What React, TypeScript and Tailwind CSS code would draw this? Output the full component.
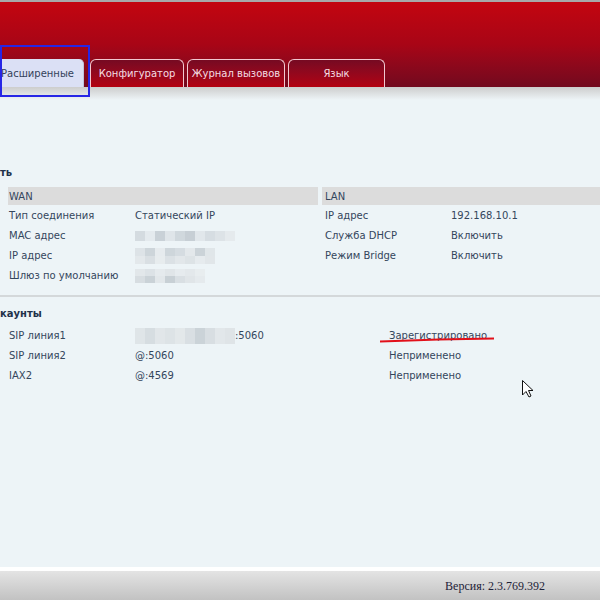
import React from 'react';

const font = { fontFamily: '"DejaVu Sans", Verdana, sans-serif' };

const Blur: React.FC<{ cells: string[]; h: string }> = ({ cells, h }) => (
  <div className={`flex ${h}`}>
    {cells.map((c, i) => (
      <div key={i} className="w-[10px] h-full" style={{ backgroundColor: c }} />
    ))}
  </div>
);

const Row: React.FC<{ label: string; children?: React.ReactNode; lw: string }> = ({ label, children, lw }) => (
  <div className="flex items-center h-[20px] pt-[1px]">
    <div className={`${lw} shrink-0`}>{label}</div>
    <div>{children}</div>
  </div>
);

export default function App() {
  return (
    <div className="w-[600px] h-[600px] overflow-hidden bg-[#edf4f7] text-[10px] text-[#34465c] relative" style={font}>
      <div className="h-[2px] bg-[#a8a8a8]" />
      {/* header */}
      <div className="h-[85px] bg-gradient-to-b from-[#c3050f] via-[#a80516] to-[#72091e] flex items-end">
        <div className="flex items-end h-[28px] w-full">
          <div className="w-[84px] h-[28px] bg-[#dbe0f5] rounded-tr-[5px] border-r border-[#c0c4dc] flex items-center pl-[1px] text-[#34425a]">
            Расширенные
          </div>
          <div className="ml-[6px] w-[94px] h-[28px] rounded-t-[6px] border border-b-0 border-[#f2c8d0] bg-gradient-to-b from-[#760a22] to-[#b3000f] flex items-center justify-center text-[#f6dde2]">
            Конфигуратор
          </div>
          <div className="ml-[3px] w-[98px] h-[28px] rounded-t-[6px] border border-b-0 border-[#f2c8d0] bg-gradient-to-b from-[#760a22] to-[#b3000f] flex items-center justify-center text-[#f6dde2]">
            Журнал вызовов
          </div>
          <div className="ml-[3px] w-[97px] h-[28px] rounded-t-[6px] border border-b-0 border-[#f2c8d0] bg-gradient-to-b from-[#760a22] to-[#b3000f] flex items-center justify-center text-[#f6dde2]">
            Язык
          </div>
        </div>
      </div>
      <div className="h-[13px] bg-gradient-to-b from-[#cdcdcd] to-[#edf4f7]" />

      {/* content */}
      <div className="h-[467px] flex flex-col">
        <div className="mt-[62px] h-[20px] flex items-center font-bold text-[#1f324a]">ть</div>
        <div className="mt-[5px] flex">
          <div className="ml-[8px] w-[310px]">
            <div className="h-[18px] bg-[#dcdcdc] flex items-center pl-[1px] pt-[1px]">WAN</div>
            <div className="pl-[1px]">
              <Row label="Тип соединения" lw="w-[126px]">Статический IP</Row>
              <Row label="MAC адрес" lw="w-[126px]">
                <Blur h="h-[10px]" cells={['#d4dbe0', '#e4eaee', '#c9d1d7', '#dfe5e9', '#d0d8dd', '#c7cfd5', '#e1e7eb', '#d6dde2', '#dde3e7', '#e5eaed']} />
              </Row>
              <Row label="IP адрес" lw="w-[126px]">
                <div className="flex flex-col">
                  <Blur h="h-[8px]" cells={['#dde3e7', '#cdd5da', '#e6ebee', '#ced6db', '#d5dce1', '#e3e8eb', '#cbd3d8', '#e0e6e9']} />
                  <Blur h="h-[8px]" cells={['#e3e8eb', '#d9dfe3', '#e7ecee', '#dbe1e5', '#e2e7ea', '#dde3e6', '#e6ebee', '#e1e6e9']} />
                </div>
              </Row>
              <Row label="Шлюз по умолчанию" lw="w-[126px]">
                <div className="flex flex-col">
                  <Blur h="h-[7px]" cells={['#e2e7ea', '#dce2e6', '#e5eaed', '#e0e5e8', '#e6ebee', '#e3e8eb', '#e8edef']} />
                  <Blur h="h-[7px]" cells={['#d7dde1', '#cad2d7', '#e2e7ea', '#c8d0d5', '#d9dfe3', '#e0e5e8', '#e5eaed']} />
                </div>
              </Row>
            </div>
          </div>
          <div className="ml-[4px] flex-1">
            <div className="h-[18px] bg-[#dcdcdc] flex items-center pl-[3px] pt-[1px]">LAN</div>
            <div className="pl-[3px]">
              <Row label="IP адрес" lw="w-[126px]">192.168.10.1</Row>
              <Row label="Служба DHCP" lw="w-[126px]">Включить</Row>
              <Row label="Режим Bridge" lw="w-[126px]">Включить</Row>
            </div>
          </div>
        </div>
        <div className="mt-[10px] h-[2px] bg-[#d4d8da]" />
        <div className="mt-[6px] h-[20px] flex items-center font-bold text-[#1f324a]">каунты</div>
        <div className="mt-[2px] ml-[9px]">
          <div className="flex items-center h-[20px] pt-[1px]">
            <div className="w-[126px] shrink-0">SIP линия1</div>
            <div className="w-[254px] shrink-0 flex items-center">
              <Blur h="h-[16px]" cells={['#dfe5e8', '#d6dde1', '#e1e6e9', '#dde3e6', '#e3e8ea', '#d9dfe3', '#cbd3d8', '#d8dee2', '#e2e7ea', '#dfe4e7']} />
              <span>:5060</span>
            </div>
            <div>Зарегистрировано</div>
          </div>
          <div className="flex items-center h-[20px] pt-[1px]">
            <div className="w-[126px] shrink-0">SIP линия2</div>
            <div className="w-[254px] shrink-0">@:5060</div>
            <div>Неприменено</div>
          </div>
          <div className="flex items-center h-[20px] pt-[1px]">
            <div className="w-[126px] shrink-0">IAX2</div>
            <div className="w-[254px] shrink-0">@:4569</div>
            <div>Неприменено</div>
          </div>
        </div>
      </div>

      <div className="h-[4px] bg-white" />
      <div className="h-[29px] bg-gradient-to-b from-[#e4e4e4] to-[#c2c2c2] flex items-center justify-end pr-[55px]">
        <span className="text-[12px] text-[#1e2238]" style={{ fontFamily: '"Liberation Serif", "Times New Roman", serif' }}>
          Версия: 2.3.769.392
        </span>
      </div>

      {/* annotation overlays */}
      <div className="absolute left-0 top-[45px] w-[90px] h-[52px] border-2 border-[#2626e6]" />
      <svg className="absolute left-0 top-0 pointer-events-none" width="600" height="600">
        <path d="M380 341.5 Q 440 339 494 338.5" stroke="#e2101a" strokeWidth="2" fill="none" />
        <path d="M522.5 380.5 L522.5 395 L526 391.5 L529 397 L531 396 L528.5 390.5 L533 390.5 Z" fill="#fff" stroke="#111" strokeWidth="1" strokeLinejoin="round" />
      </svg>
    </div>
  );
}
